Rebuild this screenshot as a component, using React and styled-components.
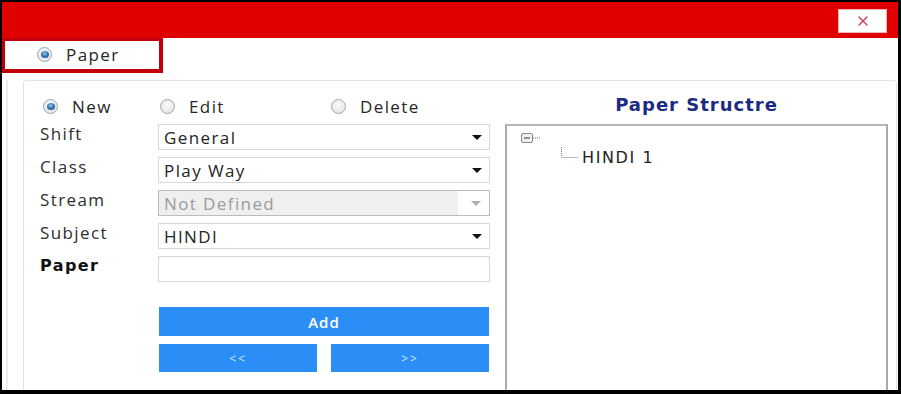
import React from "react";
import styled, { createGlobalStyle, css } from "styled-components";
import { X } from "lucide-react";

const GlobalStyle = createGlobalStyle`
    html, body {
        margin: 0;
        padding: 0;
        background: #000;
        overflow: hidden;
    }
    * {
        box-sizing: border-box;
    }
`;

const fields = [
    { label: "Shift", value: "General" },
    { label: "Class", value: "Play Way" },
    { label: "Stream", value: "Not Defined", disabled: true },
    { label: "Subject", value: "HINDI" },
];

const App = () => {
    return (
        <>
            <GlobalStyle />
            <Window>
                <TitleBar>
                    <CloseButton aria-label="close">
                        <X size={16} strokeWidth={2} color="#c9465a" />
                    </CloseButton>
                </TitleBar>
                <TabRow>
                    <TabBox>
                        <Radio checked />
                        <RadioText>Paper</RadioText>
                    </TabBox>
                </TabRow>
                <Frame>
                    <Panel>
                        <LeftColumn>
                            <ModeRow>
                                <ModeItem>
                                    <Radio checked />
                                    <RadioText>New</RadioText>
                                </ModeItem>
                                <ModeItem>
                                    <Radio />
                                    <RadioText>Edit</RadioText>
                                </ModeItem>
                                <ModeItem>
                                    <Radio />
                                    <RadioText>Delete</RadioText>
                                </ModeItem>
                            </ModeRow>
                            <Form>
                                {fields.map(f => (
                                    <React.Fragment key={f.label}>
                                        <Label>{f.label}</Label>
                                        <Select disabled={f.disabled}>
                                            <SelectValue disabled={f.disabled}>
                                                {f.value}
                                            </SelectValue>
                                            <CaretArea disabled={f.disabled}>
                                                <Caret disabled={f.disabled} />
                                            </CaretArea>
                                        </Select>
                                    </React.Fragment>
                                ))}
                                <Label bold>Paper</Label>
                                <TextInput />
                                <ButtonCell>
                                    <BlueButton tall>Add</BlueButton>
                                    <ButtonPair>
                                        <BlueButton small>&lt;&lt;</BlueButton>
                                        <BlueButton small>&gt;&gt;</BlueButton>
                                    </ButtonPair>
                                </ButtonCell>
                            </Form>
                        </LeftColumn>
                        <RightColumn>
                            <Title>Paper Structre</Title>
                            <TreeBox>
                                <TreeRow>
                                    <svg width="22" height="12" viewBox="0 0 22 12">
                                        <rect
                                            x="0.5"
                                            y="1.5"
                                            width="11"
                                            height="9"
                                            rx="1.5"
                                            fill="#f2f2f2"
                                            stroke="#8a8a8a"
                                        />
                                        <line x1="3" y1="6" x2="9" y2="6" stroke="#333" />
                                        <line
                                            x1="12"
                                            y1="6"
                                            x2="19"
                                            y2="6"
                                            stroke="#777"
                                            strokeDasharray="1 1"
                                        />
                                    </svg>
                                </TreeRow>
                                <TreeChild>
                                    <svg width="19" height="18" viewBox="0 0 19 18">
                                        <line
                                            x1="0.5"
                                            y1="0"
                                            x2="0.5"
                                            y2="10"
                                            stroke="#777"
                                            strokeDasharray="1 1"
                                        />
                                        <line
                                            x1="0.5"
                                            y1="10.5"
                                            x2="17"
                                            y2="10.5"
                                            stroke="#777"
                                            strokeDasharray="1 1"
                                        />
                                    </svg>
                                    <TreeText>HINDI 1</TreeText>
                                </TreeChild>
                            </TreeBox>
                        </RightColumn>
                    </Panel>
                </Frame>
            </Window>
        </>
    );
};

const uiFont = `"Open Sans", "Noto Sans", sans-serif`;

const Window = styled.div`
    margin: 2px 0 0 2px;
    width: 896px;
    height: 388px;
    background: #fff;
    overflow: hidden;
    display: flex;
    flex-direction: column;
    font-family: ${uiFont};
`;

const TitleBar = styled.div`
    height: 36px;
    flex: none;
    background: #e00000;
    display: flex;
    align-items: flex-start;
    justify-content: flex-end;
    padding: 7px 11px 0 0;
`;

const CloseButton = styled.button`
    width: 49px;
    height: 24px;
    background: #fff;
    border: 1px solid #eeb6b6;
    display: flex;
    align-items: center;
    justify-content: center;
    padding: 0;
`;

const TabRow = styled.div`
    flex: none;
    height: 35px;
    margin-left: -1px;
`;

const TabBox = styled.div`
    width: 162px;
    height: 35px;
    border: 4px solid #c2000c;
    border-top-width: 3px;
    display: flex;
    align-items: center;
    padding-left: 32px;
    padding-bottom: 2px;
`;

const Radio = styled.span`
    width: 15px;
    height: 15px;
    flex: none;
    border-radius: 50%;
    border: 1px solid #9ea7af;
    background: radial-gradient(circle at 50% 40%, #fbfbfb 0%, #dcdfe2 100%);
    position: relative;
    ${p =>
        p.checked &&
        css`
            &::after {
                content: "";
                position: absolute;
                left: 2.5px;
                top: 3px;
                width: 8px;
                height: 7px;
                border-radius: 50%;
                background: radial-gradient(
                    circle at 45% 35%,
                    #8fc3ea 0%,
                    #2b6fa8 55%,
                    #103c6a 100%
                );
            }
        `}
`;

const RadioText = styled.span`
    margin-left: 14px;
    font-size: 17px;
    letter-spacing: 1.4px;
    color: #262626;
`;

const Frame = styled.div`
    flex: 1;
    min-height: 0;
    margin: 7px 0 0 4px;
    border-left: 2px solid #e8eded;
    padding-left: 15px;
    display: flex;
`;

const Panel = styled.div`
    flex: 1;
    margin-right: 1px;
    border: 1px solid #e2e4e4;
    border-bottom: none;
    border-radius: 4px 4px 0 0;
    padding: 10px 8px 0 16px;
    display: flex;
    gap: 15px;
    align-items: flex-start;
`;

const LeftColumn = styled.div`
    width: 450px;
    display: flex;
    flex-direction: column;
`;

const ModeRow = styled.div`
    height: 30px;
    margin-bottom: 3px;
    display: grid;
    grid-template-columns: 117px 171px auto;
    align-items: center;
    padding-left: 3px;
`;

const ModeItem = styled.label`
    display: flex;
    align-items: center;
`;

const Form = styled.div`
    display: grid;
    grid-template-columns: 118px 332px;
    row-gap: 7px;
`;

const Label = styled.div`
    font-family: ${p => (p.bold ? `"DejaVu Sans", Verdana, sans-serif` : uiFont)};
    font-size: ${p => (p.bold ? "16px" : "17px")};
    letter-spacing: 1.4px;
    line-height: 20px;
    color: ${p => (p.bold ? "#111" : "#2e2e2e")};
    font-weight: ${p => (p.bold ? 700 : 400)};
`;

const Select = styled.div`
    height: 26px;
    border: 1px solid ${p => (p.disabled ? "#bdbdbd" : "#d8d8d8")};
    background: #fff;
    display: flex;
    align-items: stretch;
`;

const SelectValue = styled.div`
    flex: 1;
    display: flex;
    align-items: center;
    padding-left: 5px;
    font-size: 17px;
    letter-spacing: 1.4px;
    color: ${p => (p.disabled ? "#9b9b9b" : "#242424")};
    background: ${p => (p.disabled ? "#efefef" : "transparent")};
`;

const CaretArea = styled.div`
    width: ${p => (p.disabled ? "31px" : "24px")};
    display: flex;
    align-items: center;
    justify-content: center;
    padding-left: ${p => (p.disabled ? "4px" : "0")};
`;

const Caret = styled.span`
    width: 0;
    height: 0;
    border-left: 5px solid transparent;
    border-right: 5px solid transparent;
    border-top: 5px solid ${p => (p.disabled ? "#b0b0b0" : "#111")};
`;

const TextInput = styled.input`
    height: 26px;
    border: 1px solid #d8d8d8;
    background: #fff;
    outline: none;
`;

const ButtonCell = styled.div`
    grid-column: 2;
    margin-top: 18px;
    padding: 0 1px;
    display: flex;
    flex-direction: column;
    gap: 8px;
`;

const ButtonPair = styled.div`
    display: grid;
    grid-template-columns: 1fr 1fr;
    gap: 14px;
`;

const BlueButton = styled.button`
    height: ${p => (p.tall ? "29px" : "28px")};
    border: none;
    background: #2b8ef6;
    color: ${p => (p.small ? "#d6e9ff" : "#fff")};
    font-family: ${uiFont};
    font-weight: ${p => (p.small ? 400 : 600)};
    font-size: ${p => (p.small ? "12px" : "15px")};
    letter-spacing: ${p => (p.small ? "2px" : "1px")};
    padding: 0;
`;

const RightColumn = styled.div`
    flex: 1;
    display: flex;
    flex-direction: column;
`;

const Title = styled.div`
    height: 26px;
    margin-bottom: 7px;
    display: flex;
    align-items: center;
    justify-content: center;
    font-family: "DejaVu Sans", Verdana, sans-serif;
    font-weight: 700;
    font-size: 18px;
    letter-spacing: 1px;
    color: #1d2a82;
`;

const TreeBox = styled.div`
    height: 300px;
    border: 2px solid #a9a9a9;
    border-top-color: #b8b8b8;
    padding: 6px 0 0 14px;
`;

const TreeRow = styled.div`
    height: 12px;
    display: flex;
`;

const TreeChild = styled.div`
    display: flex;
    align-items: flex-start;
    margin: 3px 0 0 40px;
`;

const TreeText = styled.span`
    margin-left: 2px;
    margin-top: 1px;
    font-family: "DejaVu Sans", Tahoma, sans-serif;
    font-size: 16px;
    letter-spacing: 1.6px;
    line-height: 19px;
    color: #222;
`;

export default App;
